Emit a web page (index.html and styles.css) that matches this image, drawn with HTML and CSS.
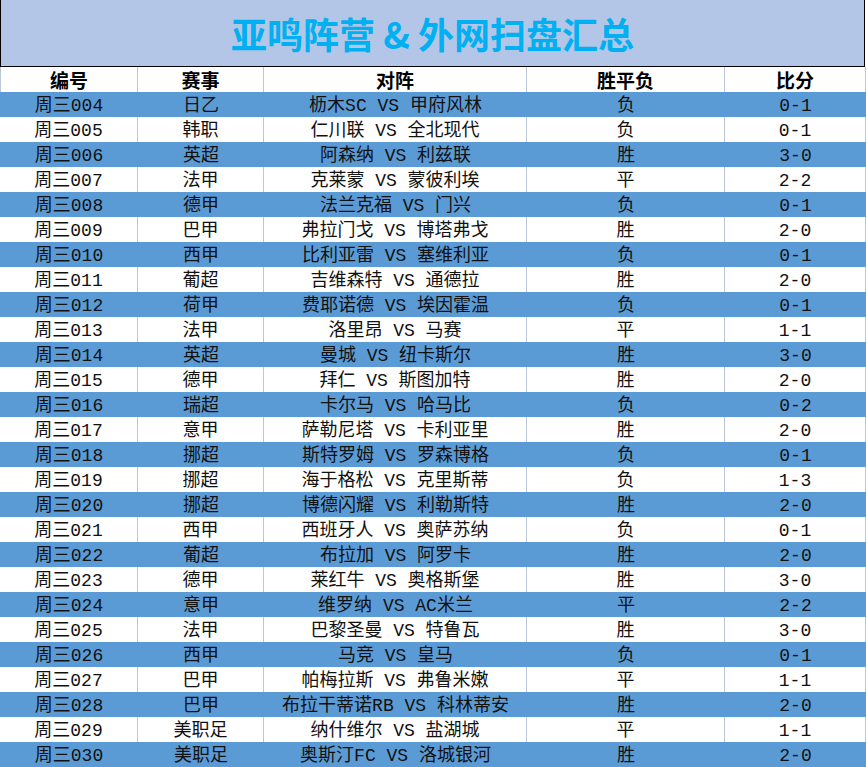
FILE: index.html
```html
<!DOCTYPE html>
<html lang="zh">
<head>
<meta charset="utf-8">
<title>亚鸣阵营 & 外网扫盘汇总</title>
<link rel="stylesheet" href="styles.css">
</head>
<body>
<div class="sheet">
  <div class="title">亚鸣阵营 &amp; 外网扫盘汇总</div>
  <div class="row head">
    <div class="cell">编号</div><div class="cell">赛事</div><div class="cell">对阵</div><div class="cell">胜平负</div><div class="cell">比分</div>
  </div>
  <div class="row blue"><div class="cell">周三004</div><div class="cell">日乙</div><div class="cell">枥木SC VS 甲府风林</div><div class="cell">负</div><div class="cell">0-1</div></div>
  <div class="row white"><div class="cell">周三005</div><div class="cell">韩职</div><div class="cell">仁川联 VS 全北现代</div><div class="cell">负</div><div class="cell">0-1</div></div>
  <div class="row blue"><div class="cell">周三006</div><div class="cell">英超</div><div class="cell">阿森纳 VS 利兹联</div><div class="cell">胜</div><div class="cell">3-0</div></div>
  <div class="row white"><div class="cell">周三007</div><div class="cell">法甲</div><div class="cell">克莱蒙 VS 蒙彼利埃</div><div class="cell">平</div><div class="cell">2-2</div></div>
  <div class="row blue"><div class="cell">周三008</div><div class="cell">德甲</div><div class="cell">法兰克福 VS 门兴</div><div class="cell">负</div><div class="cell">0-1</div></div>
  <div class="row white"><div class="cell">周三009</div><div class="cell">巴甲</div><div class="cell">弗拉门戈 VS 博塔弗戈</div><div class="cell">胜</div><div class="cell">2-0</div></div>
  <div class="row blue"><div class="cell">周三010</div><div class="cell">西甲</div><div class="cell">比利亚雷 VS 塞维利亚</div><div class="cell">负</div><div class="cell">0-1</div></div>
  <div class="row white"><div class="cell">周三011</div><div class="cell">葡超</div><div class="cell">吉维森特 VS 通德拉</div><div class="cell">胜</div><div class="cell">2-0</div></div>
  <div class="row blue"><div class="cell">周三012</div><div class="cell">荷甲</div><div class="cell">费耶诺德 VS 埃因霍温</div><div class="cell">负</div><div class="cell">0-1</div></div>
  <div class="row white"><div class="cell">周三013</div><div class="cell">法甲</div><div class="cell">洛里昂 VS 马赛</div><div class="cell">平</div><div class="cell">1-1</div></div>
  <div class="row blue"><div class="cell">周三014</div><div class="cell">英超</div><div class="cell">曼城 VS 纽卡斯尔</div><div class="cell">胜</div><div class="cell">3-0</div></div>
  <div class="row white"><div class="cell">周三015</div><div class="cell">德甲</div><div class="cell">拜仁 VS 斯图加特</div><div class="cell">胜</div><div class="cell">2-0</div></div>
  <div class="row blue"><div class="cell">周三016</div><div class="cell">瑞超</div><div class="cell">卡尔马 VS 哈马比</div><div class="cell">负</div><div class="cell">0-2</div></div>
  <div class="row white"><div class="cell">周三017</div><div class="cell">意甲</div><div class="cell">萨勒尼塔 VS 卡利亚里</div><div class="cell">胜</div><div class="cell">2-0</div></div>
  <div class="row blue"><div class="cell">周三018</div><div class="cell">挪超</div><div class="cell">斯特罗姆 VS 罗森博格</div><div class="cell">负</div><div class="cell">0-1</div></div>
  <div class="row white"><div class="cell">周三019</div><div class="cell">挪超</div><div class="cell">海于格松 VS 克里斯蒂</div><div class="cell">负</div><div class="cell">1-3</div></div>
  <div class="row blue"><div class="cell">周三020</div><div class="cell">挪超</div><div class="cell">博德闪耀 VS 利勒斯特</div><div class="cell">胜</div><div class="cell">2-0</div></div>
  <div class="row white"><div class="cell">周三021</div><div class="cell">西甲</div><div class="cell">西班牙人 VS 奥萨苏纳</div><div class="cell">负</div><div class="cell">0-1</div></div>
  <div class="row blue"><div class="cell">周三022</div><div class="cell">葡超</div><div class="cell">布拉加 VS 阿罗卡</div><div class="cell">胜</div><div class="cell">2-0</div></div>
  <div class="row white"><div class="cell">周三023</div><div class="cell">德甲</div><div class="cell">莱红牛 VS 奥格斯堡</div><div class="cell">胜</div><div class="cell">3-0</div></div>
  <div class="row blue"><div class="cell">周三024</div><div class="cell">意甲</div><div class="cell">维罗纳 VS AC米兰</div><div class="cell">平</div><div class="cell">2-2</div></div>
  <div class="row white"><div class="cell">周三025</div><div class="cell">法甲</div><div class="cell">巴黎圣曼 VS 特鲁瓦</div><div class="cell">胜</div><div class="cell">3-0</div></div>
  <div class="row blue"><div class="cell">周三026</div><div class="cell">西甲</div><div class="cell">马竞 VS 皇马</div><div class="cell">负</div><div class="cell">0-1</div></div>
  <div class="row white"><div class="cell">周三027</div><div class="cell">巴甲</div><div class="cell">帕梅拉斯 VS 弗鲁米嫩</div><div class="cell">平</div><div class="cell">1-1</div></div>
  <div class="row blue"><div class="cell">周三028</div><div class="cell">巴甲</div><div class="cell">布拉干蒂诺RB VS 科林蒂安</div><div class="cell">胜</div><div class="cell">2-0</div></div>
  <div class="row white"><div class="cell">周三029</div><div class="cell">美职足</div><div class="cell">纳什维尔 VS 盐湖城</div><div class="cell">平</div><div class="cell">1-1</div></div>
  <div class="row blue"><div class="cell">周三030</div><div class="cell">美职足</div><div class="cell">奥斯汀FC VS 洛城银河</div><div class="cell">胜</div><div class="cell">2-0</div></div>
</div>
</body>
</html>
```
FILE: styles.css
```css
html, body {
  margin: 0;
  padding: 0;
  background: #ffffff;
}
.sheet {
  width: 866px;
  font-family: "Liberation Mono", "Noto Sans CJK SC", monospace;
  color: #111111;
}
.title {
  box-sizing: border-box;
  width: 865px;
  height: 67px;
  background: #b4c6e7;
  border-left: 1px solid #000;
  border-right: 1px solid #000;
  border-bottom: 1px solid #000;
  color: #00b0f0;
  font-family: "Noto Sans CJK SC", sans-serif;
  font-weight: 700;
  font-size: 36px;
  line-height: 66px;
  text-align: center;
}
.row {
  display: grid;
  grid-template-columns: 138px 126px 263px 198px 141px;
  height: 25px;
}
.cell {
  box-sizing: border-box;
  height: 25px;
  padding-top: 3px;
  line-height: 22px;
  font-size: 18px;
  text-align: center;
  white-space: pre;
}
.white .cell,
.head .cell {
  border-right: 1px solid #bcc6d9;
}
.head .cell:first-child {
  border-left: 1px solid #bcc6d9;
}
.head .cell {
  padding-top: 1px;
  line-height: 24px;
  font-family: "Noto Sans CJK SC", sans-serif;
  font-weight: 700;
  font-size: 19px;
  color: #000;
}
.blue {
  background: #5b9bd5;
}
.white {
  background: #ffffff;
}
```
